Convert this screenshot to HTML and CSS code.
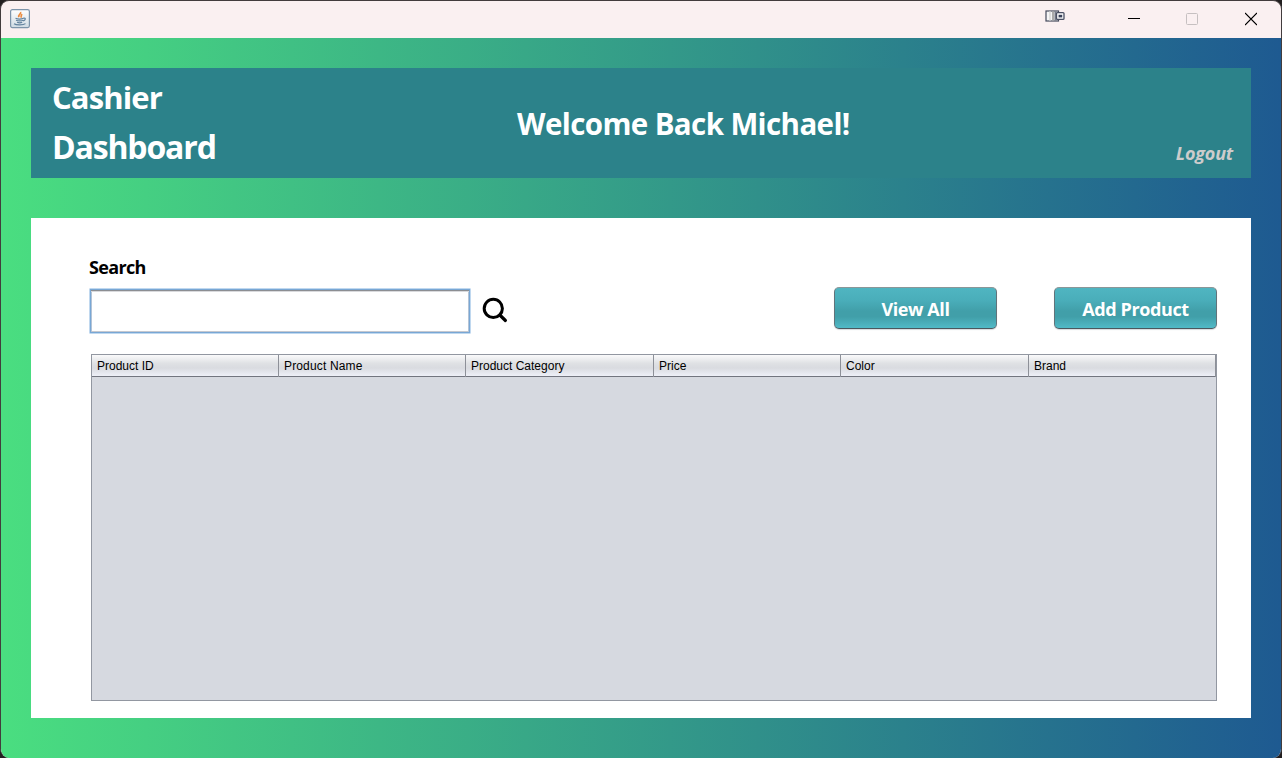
FILE: index.html
```html
<!DOCTYPE html>
<html lang="en">
<head>
<meta charset="utf-8">
<title>Cashier Dashboard</title>
<link rel="stylesheet" href="styles.css">
</head>
<body>
<div class="window">
  <header class="titlebar">
    <svg class="java-icon" width="20" height="20" viewBox="0 0 20 20">
      <defs><linearGradient id="tile" x1="0" y1="0" x2="0" y2="1"><stop offset="0" stop-color="#fff"/><stop offset="1" stop-color="#cfdbe4"/></linearGradient></defs>
      <rect x=".6" y=".6" width="18.8" height="18" rx="1.8" fill="url(#tile)" stroke="#7d94aa" stroke-width="1.2"/>
      <path d="M10.5 3c1.2 1.8-2.9 2.5-1.5 5.1M12.3 5.2c-2.4 1.2-.2 2.2-1.6 3.4" fill="none" stroke="#ec8a3c" stroke-width="1.6"/>
      <path d="M5.5 9.3c2 .8 6 .8 8 0M6 11.2c2 .8 5.5.8 7.3 0M7 13.3c1.6.6 3.8.6 5.2 0M13.5 9.2c2.8-.5 2 2.2-.4 2.8M4 14.8c2.3 1.6 9.5 1.5 11.5-.2" fill="none" stroke="#64849f" stroke-width="1.2"/>
    </svg>
    <div class="controls">
      <svg class="dock-icon" width="20" height="14" viewBox="0 0 20 14">
        <rect x="1" y="2" width="12.5" height="10" fill="#f4f4f6" stroke="#454a5c" stroke-width="1.2"/>
        <path d="M5 2.6v8.8" stroke="#ddd" stroke-width="2"/><path d="M8 2.6v8.8" stroke="#aaa" stroke-width="2"/><path d="M10.5 2.6v8.8" stroke="#777b88" stroke-width="2"/>
        <rect x="11.5" y="3.6" width="7.5" height="6.8" rx="1" fill="#f8f8fa" stroke="#4a5064" stroke-width="1.3"/>
        <rect x="13.6" y="5.8" width="3.6" height="2.6" fill="#394159"/>
      </svg>
      <svg class="minimize" width="12" height="14" viewBox="0 0 12 14"><path d="M0 6.5h12" stroke="#000"/></svg>
      <svg class="maximize" width="12" height="14" viewBox="0 0 12 14"><rect x=".5" y="1.5" width="11" height="11" rx="1" fill="none" stroke="#c6c0c1"/></svg>
      <svg class="close" width="12" height="14" viewBox="0 0 12 14"><path d="M0 1l12 12M12 1L0 13" stroke="#000" stroke-width="1.2"/></svg>
    </div>
  </header>
  <main class="content">
    <section class="banner">
      <h1 class="brand"><span class="brand-top">Cashier</span><span class="brand-bottom">Dashboard</span></h1>
      <div class="welcome">Welcome Back Michael!</div>
      <a class="logout">Logout</a>
    </section>
    <section class="panel">
      <label class="search-label" for="search">Search</label>
      <div class="toolbar">
        <input id="search" class="search" type="text">
        <svg class="search-icon" width="26" height="26" viewBox="0 0 26 26"><circle cx="11.3" cy="11.4" r="9.1" fill="none" stroke="#000" stroke-width="3"/><path d="M17.8 18l5.6 5.5" stroke="#000" stroke-width="3.2" stroke-linecap="round"/></svg>
        <button class="button view">View All</button>
        <button class="button add">Add Product</button>
      </div>
      <div class="table">
        <div class="head">
          <div class="cell">Product ID</div><div class="cell name">Product Name</div><div class="cell">Product Category</div><div class="cell">Price</div><div class="cell">Color</div><div class="cell">Brand</div>
        </div>
      </div>
    </section>
  </main>
</div>
</body>
</html>
```
FILE: styles.css
```css
* { box-sizing: border-box; }
body { margin: 0; background: #221f20; font-family: "Open Sans", "Noto Sans", sans-serif; overflow: hidden; }
.window { width: 1282px; height: 758px; border: 1px solid #423c3d; border-bottom: 0; border-radius: 9px; overflow: hidden; background: #faf0f1; display: flex; flex-direction: column; }
.titlebar { height: 37px; flex: none; display: flex; justify-content: space-between; padding: 8px 24px 0 9px; }
.controls { display: flex; align-items: flex-start; }
.dock-icon { margin-right: 63px; }
.minimize, .maximize, .close { margin-top: 3px; }
.minimize { margin-right: 46px; }
.maximize { margin-right: 47px; }
.content { flex: 1; padding: 30px; background: linear-gradient(90deg, #4ade80, #1e5a91); }
.banner { height: 110px; background: #2c828a; color: #fff; display: grid; grid-template-columns: 465px 1fr auto; padding: 0 18px 0 21px; font-weight: 700; }
.brand { margin: 0; font-size: 32px; line-height: 49px; padding-top: 5px; display: flex; flex-direction: column; align-items: flex-start; }
.brand-top { font-size: 31px; letter-spacing: -.9px; }
.brand-bottom { letter-spacing: -1.15px; }
.welcome { font-size: 29.5px; line-height: 111px; letter-spacing: -.6px; white-space: nowrap; }
.logout { font-size: 18px; font-style: italic; line-height: 24px; margin-top: 73px; color: #ccc; letter-spacing: -.2px; }
.panel { margin-top: 40px; height: 500px; background: #fff; padding: 37px 34px 0 58px; }
.search-label { display: block; height: 24px; font-size: 18px; line-height: 25px; font-weight: 700; letter-spacing: -.65px; }
.toolbar { height: 75px; display: flex; align-items: flex-start; padding-top: 8px; }
.search { width: 382px; height: 46px; margin-top: 1px; border: 1px solid #c0d8ef; outline: 0; padding: 4px 8px; font: 18px "Open Sans", sans-serif; background: #fff; border-radius: 1px; box-shadow: inset 0 0 0 1px #78a7d5, inset 0 2px #8c8e92, inset 0 3px #d9dadd, inset 2px 0 #b5c4d6, inset -2px 0 #b5c4d6, inset 0 -2px #c5c8cf; }
.search-icon { margin: 10px 0 0 11px; }
.button { width: 163px; height: 42px; border: 1px solid #62737a; border-top-color: #8b9698; border-bottom-color: #4b575e; border-radius: 5px; padding: 2px 0 0; font: 700 18px/24px "Open Sans", sans-serif; color: #fff; background: linear-gradient(#50b5c1, #4aaeba 30%, #419fa9 58%, #419fa9 72%, #50b8c5 98%); box-shadow: 0 1px 1px #d7dadd; }
.view { margin-left: 326px; letter-spacing: -.4px; }
.add { margin-left: 57px; letter-spacing: -.4px; }
.table { margin-left: 2px; height: 347px; border: 1px solid #9297a1; background: #d6d9e0; }
.head { height: 22px; display: grid; grid-template-columns: 187px 187px 188px 187px 188px 187px; border-bottom: 1px solid #72757f; background: linear-gradient(#fafafb, #dfe1e4 40%, #d9dbe0 62%, #eef0f8); }
.cell { border-right: 1px solid #8d9098; padding-left: 5px; font: 12px/22px "Liberation Sans", Arial, sans-serif; color: #000; }
.name { letter-spacing: .15px; }
```
